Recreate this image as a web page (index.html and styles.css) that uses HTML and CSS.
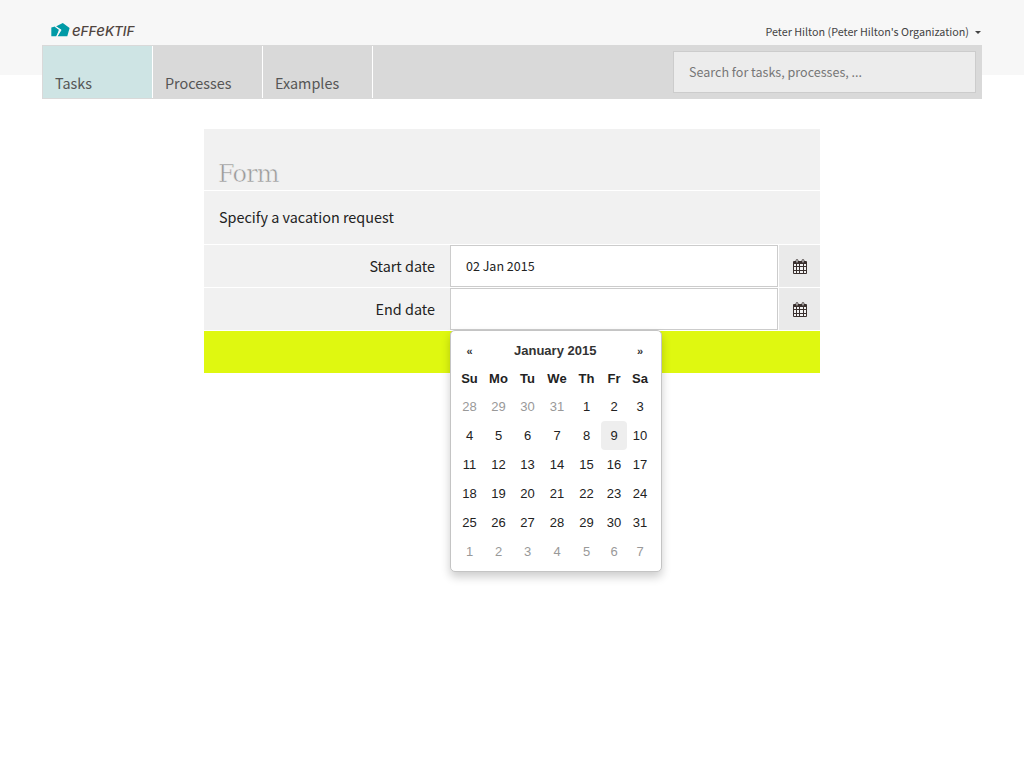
FILE: index.html
```html
<!DOCTYPE html>
<html lang="en">
<head>
<meta charset="utf-8">
<title>Effektif</title>
<link rel="stylesheet" href="styles.css">
</head>
<body>
<header class="header">
  <div class="container">
    <div class="topbar">
      <a class="logo">
        <svg class="logo-mark" width="19" height="14" viewBox="0 0 19 14"><path fill="#009aa6" d="M.3 4.500 4 3.500 8 6.600 5.600 13.300H.3z"/><path fill="#009aa6" d="M4.800 3.600 11.800.1l6.800 4.900-2.300 8.300H6.500l4-6.300z"/><path fill="none" stroke="#f7f7f7" stroke-width="1.200" d="M4 3.300 9.400 7 5.600 13.800"/></svg>
        <span class="logo-text"><span class="logo-e">e</span>FF<span class="logo-e">e</span>KTIF</span>
      </a>
      <div class="user">Peter Hilton (Peter Hilton's Organization)<span class="caret"></span></div>
    </div>
    <nav class="nav">
      <a class="tab tab-active">Tasks</a>
      <a class="tab">Processes</a>
      <a class="tab">Examples</a>
      <div class="search">Search for tasks, processes, ...</div>
    </nav>
  </div>
</header>
<main class="form">
  <h1 class="form-title">Form</h1>
  <p class="form-intro">Specify a vacation request</p>
  <div class="row">
    <label class="label">Start date</label>
    <div class="input">02 Jan 2015</div>
    <div class="picker-button"><svg class="cal-icon" width="14" height="15" viewBox="0 0 14 15"><path fill="#3a302e" d="M1 2h12q1 0 1 1v11q0 1-1 1H1q-1 0-1-1V3q0-1 1-1z"/><path fill="#f2f2f2" d="M1 5h2v2H1zm3 0h2v2H4zm3 0h3v2H7zm4 0h2v2h-2zM1 8h2v3H1zm3 0h2v3H4zm3 0h3v3H7zm4 0h2v3h-2zM1 12h2v2H1zm3 0h2v2H4zm3 0h3v2H7zm4 0h2v2h-2z"/><rect x="3" y=".5" width="2" height="3.500" rx="1" fill="#ddd" stroke="#3a302e" stroke-width=".8"/><rect x="9" y=".5" width="2" height="3.500" rx="1" fill="#ddd" stroke="#3a302e" stroke-width=".8"/></svg></div>
  </div>
  <div class="row">
    <label class="label">End date</label>
    <div class="input"></div>
    <div class="picker-button"><svg class="cal-icon" width="14" height="15" viewBox="0 0 14 15"><path fill="#3a302e" d="M1 2h12q1 0 1 1v11q0 1-1 1H1q-1 0-1-1V3q0-1 1-1z"/><path fill="#f2f2f2" d="M1 5h2v2H1zm3 0h2v2H4zm3 0h3v2H7zm4 0h2v2h-2zM1 8h2v3H1zm3 0h2v3H4zm3 0h3v3H7zm4 0h2v3h-2zM1 12h2v2H1zm3 0h2v2H4zm3 0h3v2H7zm4 0h2v2h-2z"/><rect x="3" y=".5" width="2" height="3.500" rx="1" fill="#ddd" stroke="#3a302e" stroke-width=".8"/><rect x="9" y=".5" width="2" height="3.500" rx="1" fill="#ddd" stroke="#3a302e" stroke-width=".8"/></svg></div>
    <div class="datepicker">
      <div class="month"><span class="arrow">«</span><span class="month-name">January 2015</span><span class="arrow arrow-next">»</span></div>
      <div class="days">
        <b>Su</b><b>Mo</b><b>Tu</b><b>We</b><b>Th</b><b>Fr</b><b>Sa</b>
        <i>28</i><i>29</i><i>30</i><i>31</i><span>1</span><span>2</span><span>3</span>
        <span>4</span><span>5</span><span>6</span><span>7</span><span>8</span><span class="today">9</span><span>10</span>
        <span>11</span><span>12</span><span>13</span><span>14</span><span>15</span><span>16</span><span>17</span>
        <span>18</span><span>19</span><span>20</span><span>21</span><span>22</span><span>23</span><span>24</span>
        <span>25</span><span>26</span><span>27</span><span>28</span><span>29</span><span>30</span><span>31</span>
        <i>1</i><i>2</i><i>3</i><i>4</i><i>5</i><i>6</i><i>7</i>
      </div>
    </div>
  </div>
  <div class="submit"></div>
</main>
</body>
</html>
```
FILE: styles.css
```css
* { box-sizing: border-box; }
body { margin: 0; min-height: 768px; background: #fff; color: #222; font-family: "Noto Sans CJK SC", sans-serif; font-size: 14.4px; }
.header { height: 75px; background: #f7f7f7; }
.container { width: 940px; margin: 0 auto; }
.topbar { height: 45px; display: flex; justify-content: space-between; align-items: flex-start; padding: 22px 0 0 9px; }
.logo { display: flex; gap: 2px; height: 16px; }
.logo-mark { display: block; margin-top: 1px; }
.logo-text { font: italic 500 13.5px/18px Inter, sans-serif; color: #50453f; letter-spacing: -.1px; white-space: nowrap; }
.logo-e { font-size: 15px; line-height: 1px; }
.user { font-size: 10.77px; line-height: 20px; color: #444; display: flex; align-items: center; }
.caret { margin: 1px 1px 0 6px; border: 3px solid transparent; border-top-color: #444; border-bottom: 0; }
.nav { height: 54px; background: #d9d9d9; display: flex; padding: 1px 6px 1px 1px; }
.tab { width: 110px; border-right: 1px solid #fff; padding: 25px 0 0 12px; line-height: 24px; color: #555; }
.tab-active { background: #cee4e4; }
.search { margin: 5px 0 0 auto; width: 303px; height: 42px; border: 1px solid #ccc; background: #ececec; padding-left: 15px; font-size: 12.55px; line-height: 40px; color: #777; }
.form { width: 616px; margin: 54px auto 0; display: flex; flex-direction: column; gap: 1px; }
.form-title { margin: 0; height: 61px; background: #f1f1f1; padding: 29px 0 0 14px; font: 400 24px/32px "DejaVu Serif", serif; letter-spacing: -.8px; color: #999; -webkit-text-stroke: .5px #f1f1f1; }
.form-intro { margin: 0; height: 53px; background: #f1f1f1; padding-left: 15px; line-height: 51px; }
.row { height: 42px; display: flex; position: relative; }
.label { width: 246px; background: #f1f1f1; text-align: right; padding-right: 15px; line-height: 41px; }
.input { width: 328px; border: 1px solid #ccc; padding-left: 15px; font-size: 12.5px; line-height: 40px; background: #fff; }
.picker-button { width: 41px; margin-left: 1px; background: #eaeaea; display: flex; justify-content: center; align-items: center; }
.cal-icon { display: block; margin: 1px 0 0 1px; }
.submit { height: 42px; background: #dff810; }
.datepicker { position: absolute; z-index: 2; left: 246px; top: 42px; width: 212px; height: 242px; border: 1px solid #c4c4c4; border-radius: 5px; background: #fff; box-shadow: 0 5px 10px rgba(0,0,0,.2); padding: 5px 4px; font: 13px/30px "Liberation Sans", Arial, sans-serif; color: #333; }
.month { display: flex; height: 28px; font-weight: bold; text-align: center; }
.arrow { width: 29px; font-size: 11px; }
.arrow-next { width: 26px; }
.month-name { width: 143px; padding-left: 30px; text-align: left; white-space: nowrap; flex: none; }
.days { display: grid; grid-template-columns: 29px 29px 29px 30px 29px 26px 26px; grid-template-rows: 28px repeat(6, 29px); text-align: center; line-height: 29px; color: #222; }
.days b { line-height: 30px; }
.days i { font-style: normal; color: #999; }
.today { background: #eee; border-radius: 4px; }
```
